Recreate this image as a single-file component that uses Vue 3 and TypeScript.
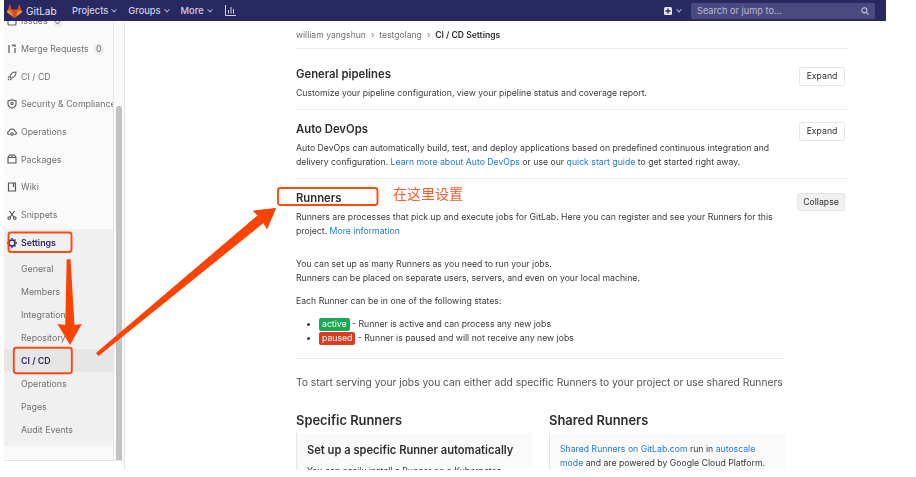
<script setup lang="ts">
interface SubItem { label: string; active?: boolean }
const subItems: SubItem[] = [
  { label: 'General' }, { label: 'Members' }, { label: 'Integrations' }, { label: 'Repository' },
  { label: 'CI / CD', active: true }, { label: 'Operations' }, { label: 'Pages' }, { label: 'Audit Events' },
]
</script>

<template>
  <div class="page">
    <div class="frame">
      <header class="nav">
        <svg class="logo" viewBox="0 0 24 22" width="15" height="14">
          <path fill="#e24329" d="M12 22l4.400-13.600H7.600z"/>
          <path fill="#fc6d26" d="M12 22L7.600 8.400H1.400z"/>
          <path fill="#fca326" d="M1.400 8.400L.1 12.500c-.1.400 0 .8.3 1L12 22z"/>
          <path fill="#e24329" d="M1.400 8.400h6.200L4.900.4c-.1-.4-.7-.4-.9 0z"/>
          <path fill="#fc6d26" d="M12 22l4.400-13.600h6.200z"/>
          <path fill="#fca326" d="M22.600 8.400l1.300 4.100c.1.400 0 .8-.3 1L12 22z"/>
          <path fill="#e24329" d="M22.600 8.400h-6.200L19.100.4c.1-.4.7-.4.9 0z"/>
        </svg>
        <span class="brand">GitLab</span>
        <span class="nav-link first">Projects<i class="chev"></i></span>
        <span class="nav-link">Groups<i class="chev"></i></span>
        <span class="nav-link">More<i class="chev"></i></span>
        <svg class="chart" viewBox="0 0 11 11" width="11" height="11" fill="none" stroke="#d1d0e3" stroke-width="1">
          <path d="M.5 0v10.500H11M3.500 5v3.500M6 2v6.500M8.500 4v4.500"/>
        </svg>
        <span class="spacer"></span>
        <svg class="plus" viewBox="0 0 8 8" width="8" height="8">
          <rect width="8" height="8" rx="1.500" fill="#e4e3ef"/>
          <path d="M4 1.500v5M1.500 4h5" stroke="#292961" stroke-width="1.300"/>
        </svg>
        <i class="chev plus-chev"></i>
        <div class="search">
          <span>Search or jump to...</span>
          <svg viewBox="0 0 10 10" width="8" height="8" fill="none" stroke="#c3c2da" stroke-width="1.400">
            <circle cx="4.200" cy="4.200" r="3.200"/><path d="M6.500 6.500L9.500 9.500"/>
          </svg>
        </div>
      </header>

      <div class="body">
        <aside class="rail">
          <div class="side">
            <div class="side-scroll">
              <div class="item">
                <svg class="ico" viewBox="0 0 10 10" fill="none" stroke="#666" stroke-width="1.200"><rect x="1" y="1" width="8" height="8" rx="1"/></svg>
                <span>Issues</span><b class="count">0</b>
              </div>
              <div class="item">
                <svg class="ico" viewBox="0 0 10 10" fill="none" stroke="#555" stroke-width="1.200"><path d="M2 1v8M8 4v5M6 1h2v2M5 1l1.500 1"/></svg>
                <span>Merge Requests</span><b class="count">0</b>
              </div>
              <div class="item">
                <svg class="ico" viewBox="0 0 10 10" fill="none" stroke="#666" stroke-width="1.100"><path d="M9 1C6 1 3.500 3 2.800 6L4 7.200C7 6.500 9 4 9 1zM2 5.500L1 7M4.500 8L3 9M2 8l-1 1"/></svg>
                <span>CI / CD</span>
              </div>
              <div class="item">
                <svg class="ico" viewBox="0 0 10 10" fill="none" stroke="#555" stroke-width="1.100"><path d="M5 .8l4 1.200v3C9 7 7 8.500 5 9.300 3 8.500 1 7 1 5V2z"/><circle cx="5" cy="4.500" r="1.200"/></svg>
                <span class="nowrap">Security &amp; Compliance</span>
              </div>
              <div class="item">
                <svg class="ico" viewBox="0 0 10 10" fill="none" stroke="#555" stroke-width="1.100"><path d="M2.500 7.500H2A1.500 1.500 0 0 1 1 5l1-.5C2.300 3 3.500 2 5 2s2.700 1 3 2.500L9 5a1.500 1.500 0 0 1-1 2.500h-.5"/><circle cx="5" cy="7" r="1.300"/></svg>
                <span>Operations</span>
              </div>
              <div class="item">
                <svg class="ico" viewBox="0 0 10 10" fill="none" stroke="#555" stroke-width="1.100"><path d="M1 3.500L2.500 1h5L9 3.500V9H1zM1 3.500h8M5 1v2.500"/></svg>
                <span>Packages</span>
              </div>
              <div class="item">
                <svg class="ico" viewBox="0 0 10 10" fill="none" stroke="#555" stroke-width="1.200"><path d="M1.500 1h7v8h-7zM6.500 1v4"/></svg>
                <span>Wiki</span>
              </div>
              <div class="item">
                <svg class="ico" viewBox="0 0 10 10" fill="none" stroke="#555" stroke-width="1.100"><path d="M2.500 1l4.300 6M7.500 1L3.200 7"/><circle cx="2.200" cy="8" r="1.300"/><circle cx="7.800" cy="8" r="1.300"/></svg>
                <span>Snippets</span>
              </div>
              <section class="settings">
                <div class="item current">
                  <svg class="ico" viewBox="0 0 10 10" fill="none" stroke="#292961" stroke-width="1.500"><circle cx="5" cy="5" r="3"/><path stroke-width="1.300" d="M5 0v1.500M5 8.500V10M0 5h1.500M8.500 5H10M1.500 1.500l1 1M7.500 7.500l1 1M1.500 8.500l1-1M7.500 2.500l1-1"/></svg>
                  <span>Settings</span>
                </div>
                <div v-for="s in subItems" :key="s.label" class="sub" :class="{ on: s.active }">{{ s.label }}</div>
              </section>
            </div>
          </div>
          <div class="track"><div class="thumb"></div></div>
          <div class="collapse-bar">« Collapse sidebar</div>
        </aside>

        <main class="main">
          <div class="crumbs">
            <span>william yangshun</span><em>›</em><span>testgolang</span><em>›</em><strong>CI / CD Settings</strong>
          </div>

          <section class="block">
            <div class="block-text">
              <h4>General pipelines</h4>
              <p>Customize your pipeline configuration, view your pipeline status and coverage report.</p>
            </div>
            <button class="btn">Expand</button>
          </section>

          <section class="block auto">
            <div class="block-text">
              <h4>Auto DevOps</h4>
              <p>Auto DevOps can automatically build, test, and deploy applications based on predefined continuous integration and delivery configuration. <a>Learn more about Auto DevOps</a> or use our <a>quick start guide</a> to get started right away.</p>
            </div>
            <button class="btn">Expand</button>
          </section>

          <section class="runners">
            <div class="runners-head">
              <div class="block-text">
                <h4>Runners</h4>
                <p>Runners are processes that pick up and execute jobs for GitLab. Here you can register and see your Runners for this project. <a>More information</a></p>
              </div>
              <button class="btn grey">Collapse</button>
            </div>
            <div class="inner">
              <p class="gap-a">You can set up as many Runners as you need to run your jobs.<br>Runners can be placed on separate users, servers, and even on your local machine.</p>
              <p class="gap-b">Each Runner can be in one of the following states:</p>
              <ul>
                <li><span class="tag green">active</span> - Runner is active and can process any new jobs</li>
                <li><span class="tag red">paused</span> - Runner is paused and will not receive any new jobs</li>
              </ul>
              <hr>
              <p class="lead">To start serving your jobs you can either add specific Runners to your project or use shared Runners</p>
              <div class="cols">
                <div class="col">
                  <h3>Specific Runners</h3>
                  <div class="well">
                    <h5>Set up a specific Runner automatically</h5>
                    <p>You can easily install a Runner on a Kubernetes</p>
                  </div>
                </div>
                <div class="col">
                  <h3>Shared Runners</h3>
                  <div class="well shared">
                    <p><a>Shared Runners on GitLab.com</a> run in <a>autoscale mode</a> and are powered by Google Cloud Platform.</p>
                  </div>
                </div>
              </div>
            </div>
          </section>
        </main>
      </div>
    </div>

    <svg class="marks" viewBox="0 0 916 477" width="916" height="477">
      <g fill="none" stroke="#fb4a12" stroke-width="1.900">
        <rect x="8.500" y="232.500" width="63" height="19.500" rx="2.500"/>
        <rect x="13.800" y="347.800" width="58" height="25.500" rx="2.500"/>
        <rect x="278" y="188" width="99.500" height="17" rx="2.500"/>
      </g>
      <path fill="#fb4303" d="M66.700 259.500L70.500 259 74.500 325 81.800 324 70 345 57.500 324 65.200 325z"/>
      <path fill="#fb4303" stroke="#fb4303" stroke-linejoin="round" d="M96.500 353L258 215.500 253.500 211 275.500 208.500 267 228.500 263.500 222.500 98.500 355.500z"/>
    </svg>
    <span class="note">在这里设置</span>
  </div>
</template>

<style>
html, body { margin: 0; background: #fff; }
</style>

<style scoped>
.page { position: relative; width: 916px; height: 477px; overflow: hidden; background: #fff; font-family: Inter, "Noto Sans CJK SC", sans-serif; color: #3a3a3a; font-size: 8.700px; }
.frame { width: 882px; height: 470px; margin-left: 4px; overflow: hidden; display: flex; flex-direction: column; filter: blur(0.45px); }

.nav { flex: none; height: 21px; background: #292961; display: flex; align-items: center; color: #d1d0e3; font-size: 9.300px; padding-left: 3px; padding-right: 11px; box-sizing: border-box; }
.logo { flex: none; }
.brand { margin-left: 4px; font-size: 10px; color: #e6e5f0; width: 38px; }
.nav-link { margin-right: 12px; display: inline-flex; align-items: center; font-weight: 500; }
.nav-link.first { margin-left: 8px; }
.chev { display: inline-block; width: 3px; height: 3px; margin-left: 4px; border-right: 1px solid #b5b4d0; border-bottom: 1px solid #b5b4d0; transform: rotate(45deg) translate(-1px, -1px); }
.chart { margin-left: 1px; }
.spacer { flex: 1; }
.plus { margin-right: -1px; }
.plus-chev { margin-left: 6px; margin-right: 10px; }
.search { width: 184px; height: 16px; background: #4b4a80; border-radius: 2px; display: flex; align-items: center; justify-content: space-between; padding: 0 6px; box-sizing: border-box; color: #b9b8d2; font-size: 9.200px; }

.body { flex: 1; min-height: 0; display: flex; }
.rail { flex: none; width: 120px; position: relative; display: grid; grid-template-columns: 110px 10px; grid-template-rows: 1fr 10px; border-right: 1px solid #e5e5e5; box-sizing: content-box; }
.side { background: #fafafa; border-right: 1px solid #e5e5e5; overflow: hidden; }
.side-scroll { margin-top: -14px; }
.track { background: #fafafa; display: flex; justify-content: center; padding-top: 85px; }
.thumb { width: 6px; height: 100%; background: #c2c2c2; border-radius: 3px 3px 0 0; }
.collapse-bar { grid-column: 1 / 3; border-top: 1px solid #e5e5e5; background: #fff; color: #666; padding-left: 14px; line-height: 26px; overflow: hidden; }
.item { height: 27.700px; display: flex; align-items: center; padding-left: 3px; color: #707070; font-size: 8.800px; white-space: nowrap; }
.ico { width: 10px; height: 10px; margin-right: 4px; flex: none; }
.count { margin-left: 5px; width: 10px; height: 12px; line-height: 12px; border-radius: 6px; background: #ededed; text-align: center; font-weight: 400; }
.settings { background: #f0f0f0; height: 217px; }
.item.current { color: #292961; font-weight: 600; height: 28px; }
.sub { height: 23px; line-height: 23px; padding-left: 17px; color: #707070; font-size: 8.800px; }
.sub.on { background: #e6e6e6; color: #292961; font-weight: 600; }

.main { flex: none; width: 552px; margin-left: 171px; line-height: 14px; color: #3a3a3a; }
.crumbs { height: 28px; box-sizing: border-box; display: flex; align-items: center; border-bottom: 1px solid #eee; color: #707070; font-size: 8.600px; gap: 5px; }
.crumbs strong { color: #2e2e2e; font-weight: 600; }
.crumbs em { font-style: normal; }
.block { display: flex; justify-content: space-between; align-items: flex-start; border-bottom: 1px solid #eee; height: 61px; box-sizing: border-box; padding: 17.500px 3px 0 0; }
.block.auto { height: 69px; padding-top: 11.500px; }
.block-text { width: 490px; }
h4 { margin: 0 0 4px; font-size: 11.300px; line-height: 15px; font-weight: 600; color: #2e2e2e; }
p { margin: 0; font-size: 8.700px; line-height: 14px; }
a { color: #1f78d1; }
.btn { flex: none; font: inherit; font-size: 8.700px; color: #2e2e2e; width: 46px; height: 19px; background: #fff; border: 1px solid #e5e5e5; border-radius: 2px; padding: 0; }
.runners { padding-top: 11.500px; }
.runners-head { display: flex; justify-content: space-between; align-items: flex-start; padding-right: 3px; }
.btn.grey { width: 48px; height: 18px; background: #f0f0f0; margin-top: 2px; }
.inner { width: 489px; }
.gap-a { margin-top: 19.500px; }
.gap-b { margin-top: 9px; }
ul { list-style: disc; margin: 9px 0 0; padding: 0 0 0 23px; font-size: 8.700px; }
li { line-height: 14px; }
.tag { display: inline-block; padding: 0 3px; line-height: 13px; height: 13px; border-radius: 2px; color: #fff; }
.tag.green { background: #1aaa55; }
.tag.red { background: #db3b21; }
hr { border: 0; border-top: 1px solid #eee; margin: 13px 0 0; }
.lead { margin-top: 16px; font-size: 10.280px; line-height: 14px; color: #555; white-space: nowrap; }
.cols { display: flex; gap: 17px; margin-top: 22.500px; }
.col { width: 236px; }
h3 { margin: 0; font-size: 12.900px; line-height: 17px; font-weight: 600; color: #2e2e2e; }
.well { margin-top: 4.500px; background: #fafafa; border-left: 1.500px solid #e5e5e5; padding: 9.500px 10px 8px; height: 70px; box-sizing: border-box; }
.well.shared { padding-top: 9px; }
h5 { margin: 0 0 6px; font-size: 11.170px; line-height: 15px; font-weight: 600; color: #2e2e2e; }

.marks { position: absolute; left: 0; top: 0; pointer-events: none; filter: blur(0.25px); }
.note { position: absolute; left: 393px; top: 185px; font-size: 14px; line-height: 18px; color: #fb5a2a; }
</style>
